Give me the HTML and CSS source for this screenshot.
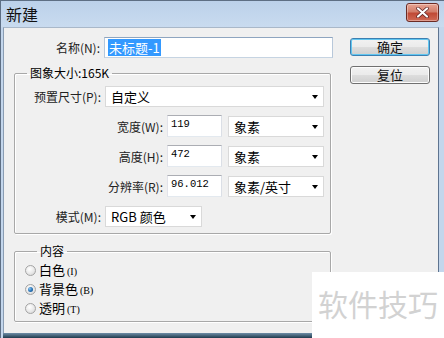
FILE: index.html
```html
<!DOCTYPE html>
<html lang="zh">
<head>
<meta charset="utf-8">
<title>新建</title>
<link rel="stylesheet" href="styles.css">
</head>
<body>
<div class="window">
  <div class="titlebar">
    <span class="title">新建</span>
    <button class="close" aria-label="关闭">
      <svg width="15" height="11" viewBox="0 0 15 11"><path d="M3 1.5 L12 9.5 M12 1.5 L3 9.5" stroke="#5a2020" stroke-width="3.6" stroke-linecap="round"/><path d="M3 1.5 L12 9.5 M12 1.5 L3 9.5" stroke="#fff" stroke-width="2.2" stroke-linecap="round"/></svg>
    </button>
  </div>
  <div class="client">
    <div class="main">
      <div class="row name-row">
        <label class="lbl lbl-short">名称(N):</label>
        <div class="input name-input"><span class="sel">未标题-1</span></div>
      </div>
      <fieldset class="group size-group">
        <legend>图象大小:165K</legend>
        <div class="row">
          <label class="lbl lbl-short">预置尺寸(P):</label>
          <div class="select preset"><span>自定义</span><i class="arrow"></i></div>
        </div>
        <div class="row">
          <label class="lbl lbl-long">宽度(W):</label>
          <div class="input num">119</div>
          <div class="select unit"><span>象素</span><i class="arrow"></i></div>
        </div>
        <div class="row">
          <label class="lbl lbl-long">高度(H):</label>
          <div class="input num">472</div>
          <div class="select unit"><span>象素</span><i class="arrow"></i></div>
        </div>
        <div class="row">
          <label class="lbl lbl-long">分辨率(R):</label>
          <div class="input num">96.012</div>
          <div class="select unit"><span>象素/英寸</span><i class="arrow"></i></div>
        </div>
        <div class="row">
          <label class="lbl lbl-short">模式(M):</label>
          <div class="select mode"><span>RGB 颜色</span><i class="arrow"></i></div>
        </div>
      </fieldset>
      <fieldset class="group content-group">
        <legend>内容</legend>
        <div class="radio-row"><span class="radio"></span><span class="rtext">白色<small>(I)</small></span></div>
        <div class="radio-row"><span class="radio on"></span><span class="rtext">背景色<small>(B)</small></span></div>
        <div class="radio-row"><span class="radio"></span><span class="rtext">透明<small>(T)</small></span></div>
      </fieldset>
    </div>
    <div class="buttons">
      <button class="btn default">确定</button>
      <button class="btn">复位</button>
    </div>
  </div>
  <div class="bottom-frame"></div>
  <div class="watermark">软件技巧</div>
</div>
</body>
</html>
```
FILE: styles.css
```css
* { box-sizing: border-box; }
html, body { margin: 0; padding: 0; }
body {
  width: 444px;
  height: 338px;
  overflow: hidden;
  font-family: "Noto Sans CJK SC", "Noto Sans", sans-serif;
  font-size: 12px;
  color: #000;
}
.window {
  position: relative;
  width: 444px;
  height: 338px;
  display: flex;
  flex-direction: column;
  background: #c3d6ec;
  border-top: 1px solid #5e6f84;
  border-left: 1px solid #5e6f84;
}
.titlebar {
  height: 26px;
  display: flex;
  align-items: center;
  justify-content: space-between;
  padding: 0 5px 0 5px;
  background: linear-gradient(#bcd1ea, #c9dbef);
}
.title {
  font-size: 16px;
  line-height: 20px;
  color: #111;
}
.close {
  width: 33px;
  height: 19px;
  margin-top: -3px;
  padding: 0;
  border: 1px solid #6b2b24;
  border-radius: 3px;
  background: linear-gradient(#e8a493 0%, #d27e6b 45%, #c04a36 55%, #d06a55 100%);
  display: flex;
  align-items: center;
  justify-content: center;
  box-shadow: inset 0 0 0 1px rgba(255,255,255,0.35);
}
.client {
  flex: 1;
  margin: 0 5px 0 2px;
  background: #f0f0f0;
  display: flex;
  border-top: 1px solid #a9b8c9;
  border-left: 1px solid #8a9db3;
  border-right: 1px solid #5e7490;
}
.main {
  width: 340px;
  padding: 9px 0 0 10px;
}
.row {
  display: flex;
  align-items: center;
  gap: 4px;
  height: 22px;
  margin-bottom: 8px;
}
.lbl {
  text-align: right;
  white-space: nowrap;
  color: #222;
}
.lbl-short { width: 86px; }
.lbl-long { width: 148px; }
.name-row { height: 21px; margin-bottom: 0; }
.input {
  height: 22px;
  background: #fff;
  border: 1px solid;
  border-color: #abadb3 #dbdfe6 #e3e9ef #e2e3ea;
}
.name-input {
  width: 229px;
  height: 21px;
  padding: 1px 3px;
  border-color: #8ea5c0 #b8c8da #c6d4e2 #b8c8da;
}
.sel {
  display: inline-block;
  background: #3399ff;
  color: #fff;
  line-height: 17px;
  padding: 0 1px;
  font-size: 13px;
}
.num {
  width: 55px;
  font-family: "Liberation Mono", "DejaVu Sans Mono", monospace;
  font-size: 10.5px;
  padding: 1px 3px 0;
  line-height: 14px;
}
.unit { margin-left: 2px; }
.select {
  height: 21px;
  background: #fff;
  border: 1px solid #d9d9d9;
  display: flex;
  align-items: center;
  justify-content: space-between;
  padding: 0 5px 0 5px;
  font-size: 13px;
}
.select span { line-height: 16px; margin-top: 1px; }
.preset { width: 219px; }
.unit { width: 96px; }
.mode { width: 97px; height: 21px; }
.arrow {
  width: 0;
  height: 0;
  border-left: 3.5px solid transparent;
  border-right: 3.5px solid transparent;
  border-top: 4px solid #000;
  margin-top: 2px;
}
.group {
  margin: 0;
  border: 1px solid #a8a8a8;
  box-shadow: inset 1px 1px 0 #fff, 1px 1px 0 #fff;
  border-radius: 2px;
  width: 317px;
  min-width: 0;
}
.group legend {
  padding: 0 3px;
  margin-left: 12px;
  line-height: 16px;
  font-size: 12px;
}
.size-group {
  margin-top: 7px;
  padding: 4px 0 0 0;
}
.size-group .row:last-child { margin-bottom: 6px; }
.content-group {
  margin-top: 9px;
  padding: 2px 0 3px 10px;
}
.radio-row {
  height: 19px;
  display: flex;
  align-items: center;
  gap: 3px;
}
.radio {
  width: 11px;
  height: 11px;
  border-radius: 50%;
  border: 1px solid #a4a4a4;
  background: radial-gradient(circle at 40% 35%, #fff 0%, #e8e8e8 55%, #cfcfcf 100%);
  display: flex;
  align-items: center;
  justify-content: center;
}
.radio.on::after {
  content: "";
  width: 5px;
  height: 5px;
  border-radius: 50%;
  background: radial-gradient(circle at 35% 35%, #8fc6f2 0%, #2a76b8 50%, #154a85 100%);
}
.rtext {
  font-size: 13px;
  line-height: 16px;
}
.rtext small {
  font-family: "Liberation Serif", serif;
  font-size: 10px;
  margin-left: 2px;
}
.buttons {
  display: flex;
  flex-direction: column;
  gap: 10px;
  padding: 10px 0 0 6px;
}
.btn {
  width: 80px;
  height: 18px;
  padding: 0;
  font-family: "Noto Sans CJK SC", sans-serif;
  font-size: 13px;
  line-height: 14px;
  color: #111;
  border: 1px solid #707070;
  border-radius: 3px;
  background: linear-gradient(#f2f2f2 0%, #ebebeb 48%, #dddddd 52%, #cfcfcf 100%);
  box-shadow: inset 0 0 0 1px #fcfcfc;
}
.btn.default {
  border-color: #3c7fb1;
  box-shadow: inset 0 0 0 1px #61c6f0;
}
.bottom-frame {
  height: 5px;
  margin: 0 5px 0 2px;
  background: linear-gradient(#6f8ea8, #1f3b4d);
}
.watermark {
  position: absolute;
  left: 311px;
  top: 271px;
  width: 133px;
  height: 67px;
  background: #fff;
  color: #d2d2d2;
  font-size: 30px;
  line-height: 30px;
  padding: 16px 0 0 6px;
  letter-spacing: 0;
}
```
